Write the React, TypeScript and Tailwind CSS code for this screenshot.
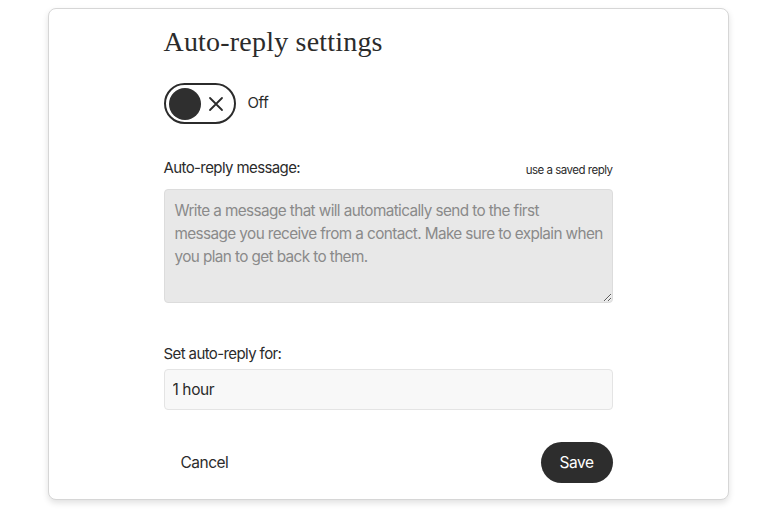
import { useState } from 'react'

const sans = "font-['Inter','Liberation_Sans',sans-serif]"

export default function App() {
  const [on, setOn] = useState(false)
  const [hours, setHours] = useState('1 hour')

  return (
    <div className={`min-h-screen bg-white pt-2 ${sans}`}>
      <div className="mx-auto w-[681px] h-[492px] rounded-lg border border-[#d6d6d6] bg-white shadow-[0_3px_6px_rgba(0,0,0,0.12)] px-[115px] pt-[17px]">
        <h1 className="font-['Liberation_Serif',serif] text-[28px] leading-8 text-[#2b2b2b] tracking-[0.2px]">Auto-reply settings</h1>

        {/* toggle */}
        <div className="mt-[25px] flex items-center gap-3">
          <button onClick={() => setOn(!on)}
            className="w-[72px] h-[41px] rounded-full border-2 border-[#2b2b2b] flex items-center justify-between pl-[3px] pr-[10px]">
            <span className="w-[32px] h-[32px] rounded-full bg-[#2f2f2f]" />
            <svg width="16" height="16" viewBox="0 0 16 16" fill="none" stroke="#2b2b2b" strokeWidth="1.8" strokeLinecap="round">
              <path d="M2 2L14 14M14 2L2 14" />
            </svg>
          </button>
          <span className="text-[15px] text-[#2b2b2b] tracking-tight">{on ? 'On' : 'Off'}</span>
        </div>

        {/* message */}
        <div className="mt-[33px] flex items-end justify-between">
          <label className="text-[15px] text-[#2b2b2b] tracking-[-0.6px]">Auto-reply message:</label>
          <span className="text-[11.5px] text-[#2b2b2b] tracking-[-0.5px]">use a saved reply</span>
        </div>
        <textarea
          className="mt-[9px] block w-full h-[114px] rounded-[4px] border border-[#dcdcdc] bg-[#e8e8e8] pl-[10px] pr-[2px] py-[9px] text-[15.3px] leading-[23px] tracking-[-0.6px] text-[#2b2b2b] placeholder:text-[#8a8a8a] outline-none"
          placeholder={'Write a message that will automatically send to the first\nmessage you receive from a contact. Make sure to explain when\nyou plan to get back to them.'}
        />

        {/* duration */}
        <label className="mt-[40px] block text-[15px] text-[#2b2b2b] tracking-[-0.6px]">Set auto-reply for:</label>
        <input value={hours} onChange={e => setHours(e.target.value)}
          className="mt-[4px] block w-full h-[41px] rounded-[4px] border border-[#e4e4e4] bg-[#f8f8f8] px-[8px] text-[15.5px] text-[#2b2b2b] tracking-[-0.4px] outline-none" />

        {/* actions */}
        <div className="mt-[32px] flex items-center justify-between">
          <button className="px-[17px] h-[41px] text-[15.5px] text-[#2b2b2b] tracking-[-0.5px]">Cancel</button>
          <button className="w-[72px] h-[41px] rounded-full bg-[#2d2d2d] text-white text-[15.5px] tracking-[-0.5px]">Save</button>
        </div>
      </div>
    </div>
  )
}
